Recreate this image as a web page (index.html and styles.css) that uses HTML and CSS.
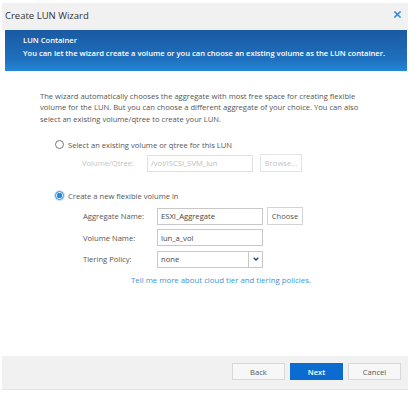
FILE: index.html
```html
<!DOCTYPE html>
<html>
<head>
<meta charset="utf-8">
<link rel="stylesheet" href="styles.css">
</head>
<body>
<div class="dialog">
  <div class="header">
    <span class="title">Create LUN Wizard</span>
    <svg class="close" width="7" height="7" viewBox="0 0 7 7"><path d="M1 1L6 6M6 1L1 6" stroke="#3a8ad6" stroke-width="1.6" stroke-linecap="square"/></svg>
  </div>
  <div class="banner">
    <div class="banner-title">LUN Container</div>
    <div class="banner-text">You can let the wizard create a volume or you can choose an existing volume as the LUN container.</div>
  </div>
  <div class="content">
    <p class="intro">The wizard automatically chooses the aggregate with most free space for creating flexible volume for the LUN. But you can choose a different aggregate of your choice. You can also select an existing volume/qtree to create your LUN.</p>

    <div class="option">
      <div class="radio-row"><span class="radio"></span><span>Select an existing volume or qtree for this LUN</span></div>
      <div class="field-row disabled-row">
        <span class="lbl lbl-qtree">Volume/Qtree:</span>
        <span class="input input-disabled">/vol/iSCSI_SVM_lun</span>
        <span class="btn btn-disabled">Browse...</span>
      </div>
    </div>

    <div class="option option-new">
      <div class="radio-row"><span class="radio radio-checked"></span><span>Create a new flexible volume in</span></div>
      <div class="fields">
        <div class="field-row">
          <span class="lbl">Aggregate Name:</span>
          <span class="input">ESXI_Aggregate</span>
          <span class="btn btn-choose">Choose</span>
        </div>
        <div class="field-row">
          <span class="lbl">Volume Name:</span>
          <span class="input">lun_a_vol</span>
        </div>
        <div class="field-row">
          <span class="lbl">Tiering Policy:</span>
          <span class="input select"><span class="select-val">none</span><span class="arrow"><svg width="6" height="4" viewBox="0 0 6 4"><path d="M0.7 0.7L3 3L5.3 0.7" fill="none" stroke="#1f3f7a" stroke-width="1.4"/></svg></span></span>
        </div>
      </div>
      <div class="link">Tell me more about cloud tier and tiering policies.</div>
    </div>
  </div>
  <div class="footer">
    <span class="fbtn">Back</span>
    <span class="fbtn fbtn-primary">Next</span>
    <span class="fbtn">Cancel</span>
  </div>
</div>
</body>
</html>
```

FILE: styles.css
```css
* { box-sizing: border-box; }
html, body { margin: 0; padding: 0; background: #fff; }
body {
  font-family: "Open Sans", "Noto Sans", sans-serif;
  font-size: 7.6px;
  color: #555;
}
.dialog {
  margin: 3px 2px 0 2px;
  width: 406px;
  height: 387px;
  display: flex;
  flex-direction: column;
  background: #fff;
}
.header {
  height: 27px;
  flex: none;
  background: #f1f1f1;
  display: flex;
  align-items: center;
  justify-content: space-between;
  padding: 0 7px 2px 3px;
}
.title {
  font-size: 9.5px;
  color: #333;
}
.close { display: block; margin-top: -2px; }
.banner {
  flex: none;
  margin: 0 1px 0 3px;
  height: 41px;
  background: linear-gradient(to bottom, #1a5aa2 0%, #1e6fbd 70%, #2388d6 100%);
  color: #fff;
  font-weight: 600;
  padding: 4px 0 0 18px;
  line-height: 13px;
  font-size: 7.6px;
  white-space: nowrap;
}
.content {
  flex: 1;
  padding: 20px 0 0 38px;
}
.intro {
  margin: 0;
  width: 326px;
  line-height: 11.3px;
  color: #555;
}
.option { margin-top: 14px; }
.option-new { margin-top: 18px; }
.radio-row {
  display: flex;
  align-items: center;
  gap: 4px;
  margin-left: 15px;
  height: 12px;
  color: #555;
}
.radio {
  width: 9px;
  height: 9px;
  border-radius: 50%;
  border: 1px solid #777;
  background: #fff;
  display: inline-block;
}
.radio-checked {
  border-color: #2c87d8;
  background: radial-gradient(circle, #2c87d8 0 2.5px, #fff 3px);
  box-shadow: 0 0 0 1px #cfe3f6;
}
.field-row {
  display: flex;
  align-items: center;
  height: 17px;
  margin-top: 4.5px;
}
.disabled-row { margin-left: 42px; margin-top: 4px; }
.lbl { width: 74px; color: #555; }
.lbl-qtree { width: 65px; color: #c4c4c4; }
.fields { margin-left: 43px; margin-top: 6px; }
.input {
  width: 106px;
  height: 17px;
  border: 1px solid #c8c8c8;
  padding: 0 3px;
  display: flex;
  align-items: center;
  color: #444;
  background: #fff;
}
.input-disabled { color: #bbb; border-color: #e0e0e0; }
.btn {
  height: 17px;
  border: 1px solid #d4d4d4;
  display: flex;
  align-items: center;
  justify-content: center;
  background: #fff;
  color: #555;
}
.btn-disabled { width: 42px; margin-left: 7px; color: #c4c4c4; border-color: #e4e4e4; height: 18px; }
.btn-choose { width: 36px; margin-left: 4px; height: 18px; }
.select { padding-right: 0; justify-content: space-between; }
.arrow {
  width: 14px;
  height: 15px;
  border-left: 1px solid #c8c8c8;
  display: flex;
  align-items: center;
  justify-content: center;
}
.link {
  margin-top: 6px;
  margin-left: 91px;
  color: #3b94d9;
  height: 12px;
  line-height: 12px;
  font-size: 7.8px;
}
.footer {
  flex: none;
  height: 34px;
  background: #f1f1f1;
  border-bottom: 1px solid #e4e4e4;
  display: flex;
  align-items: center;
  justify-content: flex-end;
  gap: 5px;
  padding: 0 7px 2px 0;
}
.fbtn {
  width: 53px;
  height: 17px;
  border: 1px solid #d8d8d8;
  background: #f7f7f7;
  color: #555;
  display: flex;
  align-items: center;
  justify-content: center;
}
.fbtn-primary {
  background: #0c6bd0;
  border-color: #0c6bd0;
  color: #fff;
  font-weight: 600;
}
```
